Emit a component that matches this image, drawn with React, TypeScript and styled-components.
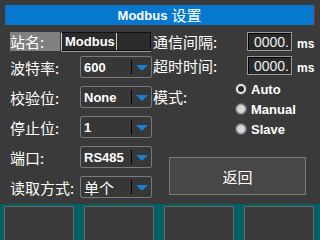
import React from "react";
import styled, { createGlobalStyle } from "styled-components";

const Global = createGlobalStyle`
  html, body { margin: 0; padding: 0; background: #006262; }
  body {
    width: 320px; min-height: 209px; overflow: hidden;
    font-family: "Liberation Sans", "Noto Sans CJK SC", sans-serif;
    color: #fff;
  }
`;

const CJK = `"Noto Sans CJK SC", "Liberation Sans", sans-serif`;

const Screen = styled.div`
  display: flex;
  flex-direction: column;
  width: 320px;
  min-height: 100vh;
`;

const Window = styled.div`
  height: 204px;
  flex-shrink: 0;
  background: #3a3a3a;
  display: flex;
  flex-direction: column;
  box-sizing: border-box;
`;

const TitleBar = styled.div`
  margin: 5px 5px 0 5px;
  height: 20px;
  background: #0778cf;
  border-right: 1px solid #8a3030;
  display: flex;
  align-items: center;
  justify-content: center;
  gap: 4px;
`;

const TitleLatin = styled.span`
  font-family: "Liberation Sans", sans-serif;
  font-weight: bold;
  font-size: 13px;
`;

const TitleCJK = styled.span`
  font-family: ${CJK};
  font-size: 15px;
  line-height: 20px;
`;

const Body = styled.div`
  display: flex;
  padding-left: 10px;
`;

const LeftCol = styled.div`
  width: 143px;
  display: flex;
  flex-direction: column;
`;

const RightCol = styled.div`
  flex: 1;
  display: flex;
  flex-direction: column;
`;

const Row = styled.div<{ $top: number; $h: number }>`
  display: flex;
  align-items: center;
  margin-top: ${(p) => p.$top}px;
  height: ${(p) => p.$h}px;
`;

const Label = styled.div<{ $w: number; $hl?: boolean }>`
  width: ${(p) => p.$w}px;
  height: 19px;
  line-height: 19px;
  font-family: ${CJK};
  font-size: 15px;
  background: ${(p) => (p.$hl ? "#808080" : "transparent")};
  white-space: nowrap;
  flex-shrink: 0;
`;

const TextInput = styled.div`
  margin-left: 1px;
  width: 90px;
  height: 19px;
  box-sizing: border-box;
  background: #2b2b2b;
  border: 1px solid #111;
  border-left-color: #cfcfcf;
  box-shadow: 0 1px 0 #9a9a9a;
  display: flex;
  align-items: center;
  padding-left: 3px;
  font-weight: bold;
  font-size: 13px;
`;

const Caret = styled.span`
  width: 1px;
  height: 17px;
  background: #c8c8c8;
  margin-left: 1px;
`;

const NumInput = styled.div`
  width: 45px;
  height: 19px;
  box-sizing: border-box;
  background: #2a2a2a;
  border: 1px solid #9a9a9a;
  box-shadow: inset 1px 1px 0 #000;
  display: flex;
  align-items: center;
  justify-content: flex-end;
  padding-right: 2px;
  font-size: 14px;
  color: #eeeeee;
`;

const Unit = styled.span`
  margin-left: 5px;
  margin-top: 4px;
  font-weight: bold;
  font-size: 12px;
`;

const Select = styled.div`
  width: 72px;
  height: 22px;
  box-sizing: border-box;
  border: 1px solid #7a7a7a;
  border-radius: 2px;
  background: #373737;
  display: flex;
  align-items: center;
`;

const SelectValue = styled.span<{ $cjk?: boolean }>`
  flex: 1;
  padding-left: 3px;
  font-family: ${(p) => (p.$cjk ? CJK : `"Liberation Sans", sans-serif`)};
  font-weight: ${(p) => (p.$cjk ? "normal" : "bold")};
  font-size: ${(p) => (p.$cjk ? "15px" : "13px")};
  white-space: nowrap;
`;

const Sep = styled.span`
  width: 1px;
  height: 14px;
  background: #000;
`;

const ArrowBox = styled.span`
  width: 19px;
  display: flex;
  justify-content: center;
`;

const Arrow = styled.span`
  width: 0;
  height: 0;
  border-left: 6px solid transparent;
  border-right: 6px solid transparent;
  border-top: 6px solid #1b7fd6;
  margin-top: 1px;
`;

const ModeSection = styled.div`
  display: flex;
  margin-top: 4px;
`;

const ModeLabel = styled.div`
  width: 83px;
  padding-top: 9px;
  font-family: ${CJK};
  font-size: 15px;
  line-height: 18px;
`;

const RadioList = styled.div`
  display: flex;
  flex-direction: column;
`;

const RadioRow = styled.div`
  height: 20px;
  display: flex;
  align-items: center;
  gap: 5px;
  font-weight: bold;
  font-size: 13px;
`;

const RadioDot = styled.span<{ $filled?: boolean }>`
  width: 10px;
  height: 10px;
  border-radius: 50%;
  box-sizing: border-box;
  background: ${(p) => (p.$filled ? "#d6d6d6" : "#2b2b2b")};
  border: ${(p) => (p.$filled ? "1px solid #9a9a9a" : "2px solid #e8e8e8")};
  box-shadow: ${(p) => (p.$filled ? "0 0 0 1px #666" : "0 0 0 1px #555")};
`;

const ReturnButton = styled.button`
  margin: 18px 0 0 16px;
  width: 137px;
  height: 38px;
  box-sizing: border-box;
  background: #474747;
  border: 1px solid #7a7a7a;
  color: #fff;
  font-family: ${CJK};
  font-size: 15px;
  padding: 0;
`;

const TaskStrip = styled.div`
  flex: 1;
  display: flex;
  gap: 10px;
  padding: 2px 0 0 4px;
`;

const TaskBox = styled.div`
  width: 70px;
  box-sizing: border-box;
  border: 1px solid #6a6a6a;
  border-bottom: none;
  background: #3a3a3a;
`;

const selects: { label: string; value: string; cjk?: boolean }[] = [
  { label: "波特率:", value: "600" },
  { label: "校验位:", value: "None" },
  { label: "停止位:", value: "1" },
  { label: "端口:", value: "RS485" },
  { label: "读取方式:", value: "单个", cjk: true },
];

export default function App() {
  return (
    <>
      <Global />
      <Screen>
        <Window>
          <TitleBar>
            <TitleLatin>Modbus</TitleLatin>
            <TitleCJK>设置</TitleCJK>
          </TitleBar>
          <Body>
            <LeftCol>
              <Row $top={7} $h={19}>
                <Label $w={50} $hl>站名:</Label>
                <TextInput>
                  Modbus<Caret />
                </TextInput>
              </Row>
              {selects.map((s, i) => (
                <Row key={s.label} $top={i === 0 ? 5 : 8} $h={22}>
                  <Label $w={70}>{s.label}</Label>
                  <Select>
                    <SelectValue $cjk={s.cjk}>{s.value}</SelectValue>
                    <Sep />
                    <ArrowBox>
                      <Arrow />
                    </ArrowBox>
                  </Select>
                </Row>
              ))}
            </LeftCol>
            <RightCol>
              <Row $top={7} $h={19}>
                <Label $w={94}>通信间隔:</Label>
                <NumInput>0000.</NumInput>
                <Unit>ms</Unit>
              </Row>
              <Row $top={5} $h={19}>
                <Label $w={94}>超时时间:</Label>
                <NumInput>0000.</NumInput>
                <Unit>ms</Unit>
              </Row>
              <ModeSection>
                <ModeLabel>模式:</ModeLabel>
                <RadioList>
                  <RadioRow>
                    <RadioDot />
                    Auto
                  </RadioRow>
                  <RadioRow>
                    <RadioDot $filled />
                    Manual
                  </RadioRow>
                  <RadioRow>
                    <RadioDot $filled />
                    Slave
                  </RadioRow>
                </RadioList>
              </ModeSection>
              <ReturnButton>返回</ReturnButton>
            </RightCol>
          </Body>
        </Window>
        <TaskStrip>
          <TaskBox />
          <TaskBox />
          <TaskBox />
          <TaskBox />
        </TaskStrip>
      </Screen>
    </>
  );
}
